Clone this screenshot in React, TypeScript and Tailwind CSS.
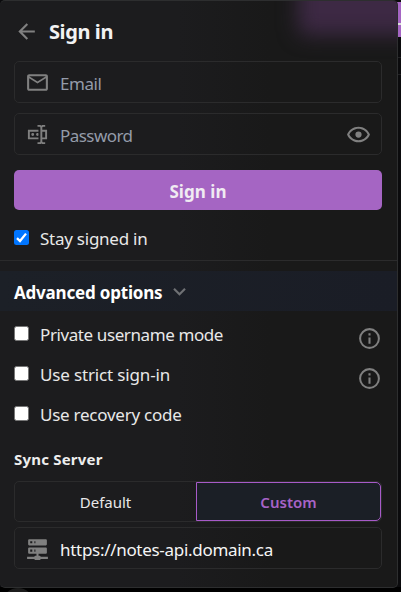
import React from "react";

const paths = {
  back: "M20,11V13H8L13.5,18.5L12.08,19.92L4.16,12L12.08,4.08L13.5,5.5L8,11H20Z",
  mail: "M22 6C22 4.9 21.1 4 20 4H4C2.9 4 2 4.9 2 6V18C2 19.1 2.9 20 4 20H20C21.1 20 22 19.1 22 18V6M20 6L12 11L4 6H20M20 18H4V8L12 13L20 8V18Z",
  password:
    "M17,7H22V17H17V19A1,1 0 0,0 18,20H20V22H17.5C16.95,22 16,21.55 16,21C16,21.55 15.05,22 14.5,22H12V20H14A1,1 0 0,0 15,19V5A1,1 0 0,0 14,4H12V2H14.5C15.05,2 16,2.45 16,3C16,2.45 16.95,2 17.5,2H20V4H18A1,1 0 0,0 17,5V7M2,7H13V9H4V15H13V17H2V7M20,15V9H17V15H20M8.5,12A1.5,1.5 0 0,0 7,10.5A1.5,1.5 0 0,0 5.5,12A1.5,1.5 0 0,0 7,13.5A1.5,1.5 0 0,0 8.5,12M13,10.89C12.39,10.33 11.44,10.38 10.88,11C10.32,11.6 10.37,12.55 11,13.11C11.55,13.63 12.43,13.63 13,13.11V10.89Z",
  eye: "M12,9A3,3 0 0,1 15,12A3,3 0 0,1 12,15A3,3 0 0,1 9,12A3,3 0 0,1 12,9M12,4.5C17,4.5 21.27,7.61 23,12C21.27,16.39 17,19.5 12,19.5C7,19.5 2.73,16.39 1,12C2.73,7.61 7,4.5 12,4.5M3.18,12C4.83,15.36 8.24,17.5 12,17.5C15.76,17.5 19.17,15.36 20.82,12C19.17,8.64 15.76,6.5 12,6.5C8.24,6.5 4.83,8.64 3.18,12Z",
  chevron: "M7.41,8.58L12,13.17L16.59,8.58L18,10L12,16L6,10L7.41,8.58Z",
  info: "M11,9H13V7H11M12,20C7.59,20 4,16.41 4,12C4,7.59 7.59,4 12,4C16.41,4 20,7.59 20,12C20,16.41 16.41,20 12,20M12,2A10,10 0 0,0 2,12A10,10 0 0,0 12,22A10,10 0 0,0 22,12A10,10 0 0,0 12,2M11,17H13V11H11V17Z",
  server:
    "M13,19H14A1,1 0 0,1 15,20H22V22H15A1,1 0 0,1 14,23H10A1,1 0 0,1 9,22H2V20H9A1,1 0 0,1 10,19H11V17H4A1,1 0 0,1 3,16V12A1,1 0 0,1 4,11H20A1,1 0 0,1 21,12V16A1,1 0 0,1 20,17H13V19M4,3H20A1,1 0 0,1 21,4V8A1,1 0 0,1 20,9H4A1,1 0 0,1 3,8V4A1,1 0 0,1 4,3M9,7H10V5H9V7M9,15H10V13H9V15M5,5V7H7V5H5M5,13V15H7V13H5Z",
};

function Icon({ name, className = "size-[25px] fill-[#808080]" }: { name: keyof typeof paths; className?: string }) {
  return (
    <svg viewBox="0 0 24 24" className={`shrink-0 ${className}`} aria-hidden="true">
      <path d={paths[name]} />
    </svg>
  );
}

function Checkbox({ checked = false }: { checked?: boolean }) {
  return checked ? (
    <span className="flex size-[15px] shrink-0 items-center justify-center rounded-[2.5px] bg-[#0075ff]">
      <svg viewBox="0 0 15 15" className="size-[15px]" fill="none" stroke="#fff" strokeWidth="2.3">
        <path d="M3 8.1 L6 11 L12 3.6" />
      </svg>
    </span>
  ) : (
    <span className="block size-[15px] shrink-0 rounded-[2.5px] border border-[#767676] bg-white" />
  );
}

function Field({ icon, children }: { icon: React.ReactNode; children: React.ReactNode }) {
  return (
    <div className="flex h-[42px] items-center rounded-[5px] border border-[#2b2b2c] pr-[10px] pl-[10px]">
      <span className="flex w-[25px] shrink-0 justify-center">{icon}</span>
      {children}
    </div>
  );
}

function Option({ label, tracking, info = false }: { label: string; tracking: string; info?: boolean }) {
  return (
    <div className="flex h-10 items-start">
      <div className="mt-[15px]">
        <Checkbox />
      </div>
      <span className={`mt-3 ml-[11px] flex-1 text-[17px] leading-6 text-[#e8e8e8] ${tracking}`}>{label}</span>
      {info && (
        <span className="mt-[15px]">
          <Icon name="info" />
        </span>
      )}
    </div>
  );
}

export default function App() {
  return (
    <div className="relative h-[592px] w-[401px] overflow-hidden bg-[#0b0b0d] font-['Noto_Sans',sans-serif]">
      <div className="absolute top-[2px] right-0 h-[35px] w-[4px] bg-[#a565c3]" />
      <div className="absolute top-[23px] right-0 h-[2px] w-[3px] bg-[#dedede]" />
      <div className="absolute top-[57px] right-0 h-[18px] w-[4px] border-y border-[#222224]" />
      <div className="absolute bottom-0 left-0 h-[5px] w-full bg-black" />
      <div className="absolute top-[588px] left-[2px] size-[32px] rounded-full bg-[#1c1c1c]" />

      <div className="relative h-[588px] w-[398px] overflow-hidden rounded-[5px] border-t border-r border-b border-[#2d2e2f] bg-[linear-gradient(to_right,#1c1c1e_0%,#1c1c1e_45%,#191919_68%,#191919_100%)]">
        <div className="absolute -top-[40px] left-[298px] h-[74px] w-[160px] rounded-[8px] bg-[#3d2944] blur-[10px]" />

        <div className="relative">
          <header className="flex h-[60px] items-center pl-[14px]">
            <Icon name="back" />
            <h1 className="ml-[10px] pt-[1px] text-[20px] font-bold tracking-[-0.4px] text-[#f2f2f2]">Sign in</h1>
          </header>

          <div className="mr-[15px] ml-[14px] flex flex-col">
            <Field icon={<Icon name="mail" />}>
              <span className="ml-[10px] pt-[3px] text-[17px] tracking-[-0.45px] text-[#949ba9]">Email</span>
            </Field>
            <div className="mt-[10px]">
              <Field icon={<Icon name="password" className="size-[23px] fill-[#808080]" />}>
                <span className="ml-[10px] flex-1 pt-[3px] text-[17px] tracking-[-0.55px] text-[#949ba9]">Password</span>
                <Icon name="eye" />
              </Field>
            </div>
            <button className="mt-[15px] h-10 rounded-[5px] bg-[#a565c3] pt-[3px] text-[17px] font-bold tracking-[0.05px] text-[#f0ebf2]">
              Sign in
            </button>
            <div className="mt-[20px] flex h-[30px] items-start">
              <Checkbox checked />
              <span className="-mt-[3px] ml-[11px] text-[17px] leading-6 tracking-[-0.25px] text-[#e8e8e8]">Stay signed in</span>
            </div>
          </div>

          <hr className="border-[#2b2b2c]" />
          <div className="mt-[10px] flex h-10 items-center bg-[linear-gradient(to_right,#1c2027,#1a1d26)] pl-[14px]">
            <h2 className="pt-[3px] text-[17px] font-bold tracking-[-0.2px] text-white">Advanced options</h2>
            <Icon name="chevron" className="ml-[5px] size-[25px] fill-[#6f7174]" />
          </div>

          <div className="mr-[15px] ml-[14px]">
            <Option label="Private username mode" tracking="tracking-[-0.4px]" info />
            <Option label="Use strict sign-in" tracking="tracking-[-0.15px]" info />
            <Option label="Use recovery code" tracking="tracking-[-0.25px]" />
            <h3 className="mt-[16px] text-[15px] leading-6 font-bold tracking-[0.2px] text-[#ededed]">Sync Server</h3>
            <div className="mt-[10px] flex h-[41px] rounded-[5px] border border-[#2b2b2c]">
              <span className="flex flex-1 items-center justify-center pt-[2px] text-[15px] text-[#e8e8e8]">Default</span>
              <span className="flex w-[185px] items-center justify-center rounded-r-[5px] border border-[#a75ac8] bg-[#1b1f26] pt-[2px] text-[15px] font-semibold text-[#a763c7]">
                Custom
              </span>
            </div>
            <div className="mt-[5px]">
              <Field icon={<Icon name="server" />}>
                <span className="ml-[10px] pt-[3px] text-[17px] tracking-[-0.3px] text-[#f5f5f5]">https://notes-api.domain.ca</span>
              </Field>
            </div>
          </div>
        </div>
      </div>
    </div>
  );
}
